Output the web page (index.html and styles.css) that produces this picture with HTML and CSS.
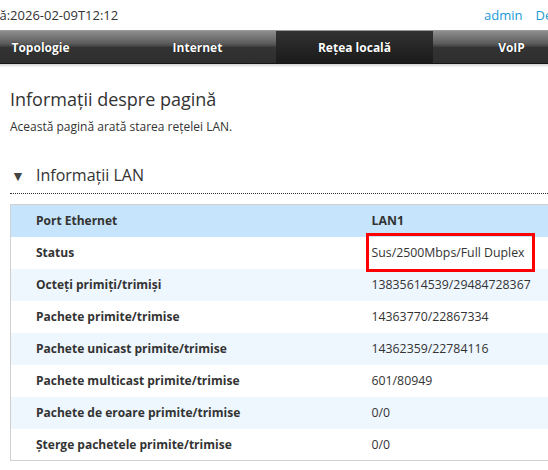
FILE: index.html
```html
<!DOCTYPE html>
<html lang="ro">

<head>
	<meta charset="UTF-8">
	<title>Rețea locală</title>
	<link rel="stylesheet" href="styles.css">
</head>

<body>
	<div class="page">
		<div class="topbar">
			<span class="clock">Ora curentă:2026-02-09T12:12</span>
			<span class="user">
				<a href="#">admin</a>
				<a href="#">Deconectare</a>
			</span>
		</div>
		<nav class="menu">
			<a href="#">Topologie</a>
			<a href="#">Internet</a>
			<a href="#" class="active">Rețea locală</a>
			<a href="#">VoIP</a>
			<a href="#">Administrare</a>
		</nav>
		<main class="content">
			<h1>Informații despre pagină</h1>
			<p class="desc">Această pagină arată starea rețelei LAN.</p>
			<h2 class="section"><span class="arrow">&#9660;</span>Informații LAN</h2>
			<table class="info">
				<thead>
					<tr>
						<th>Port Ethernet</th>
						<th>LAN1</th>
					</tr>
				</thead>
				<tbody>
					<tr>
						<td>Status</td>
						<td><span class="mark">Sus/2500Mbps/Full Duplex</span></td>
					</tr>
					<tr>
						<td>Octeți primiți/trimiși</td>
						<td>13835614539/29484728367</td>
					</tr>
					<tr>
						<td>Pachete primite/trimise</td>
						<td>14363770/22867334</td>
					</tr>
					<tr>
						<td>Pachete unicast primite/trimise</td>
						<td>14362359/22784116</td>
					</tr>
					<tr>
						<td>Pachete multicast primite/trimise</td>
						<td>601/80949</td>
					</tr>
					<tr>
						<td>Pachete de eroare primite/trimise</td>
						<td>0/0</td>
					</tr>
					<tr>
						<td>Șterge pachetele primite/trimise</td>
						<td>0/0</td>
					</tr>
				</tbody>
			</table>
		</main>
	</div>
</body>

</html>
```

FILE: styles.css
```css
* {
	padding: 0;
	margin: 0;
	box-sizing: border-box;
}

body {
	overflow: hidden;
	background-color: white;
	font-family: "Open Sans", "Noto Sans", sans-serif;
	color: #333;
}

/* the page is wider than the window and scrolled a little to the right */
.page {
	width: 820px;
	margin-left: -38px;
}

.topbar {
	height: 30px;
	display: grid;
	grid-template-columns: 522px auto;
	align-items: center;
	font-size: 13px;
}

.clock {
	margin-left: -28px;
	white-space: nowrap;
}

.user {
	display: flex;
	gap: 13px;
}

.user a {
	color: #1a9ad6;
	text-decoration: none;
}

.menu {
	display: grid;
	grid-template-columns: repeat(5, 157px);
	height: 34px;
	border-top: 1px solid #9a9a9a;
	border-bottom: 1px solid #161616;
	box-shadow: 0 2px 2px #d8d8d8;
	background: linear-gradient(#8e8e8e, #5a5a5a 40%, #3c3c3c 50%, #333 51%, #2e2e2e);
}

.menu a {
	display: flex;
	align-items: center;
	justify-content: center;
	color: white;
	font-size: 12px;
	font-weight: bold;
	text-decoration: none;
	text-shadow: 0 0 1px #000;
}

.menu a.active {
	background: linear-gradient(#333, #262626 50%, #1b1b1b);
}

.content {
	padding: 0 0 0 48px;
}

h1 {
	font-size: 18px;
	font-weight: normal;
	margin-top: 23px;
	line-height: 24px;
}

.desc {
	font-size: 12px;
	margin-top: 7px;
}

.section {
	font-size: 16px;
	font-weight: normal;
	margin-top: 29px;
	padding: 0 0 7px 1px;
	border-bottom: 1px dotted #333;
	display: flex;
	align-items: center;
}

.arrow {
	font-size: 14px;
	color: #444;
	width: 25px;
}

.info {
	margin-top: 10px;
	width: 100%;
	border-collapse: collapse;
	border: 1px solid #d0d0d0;
	border-right: none;
	font-size: 12.3px;
}

.info th,
.info td {
	height: 32px;
	padding: 0 0 0 25px;
	text-align: left;
	vertical-align: middle;
	white-space: nowrap;
}

.info th:first-child,
.info td:first-child {
	width: 336px;
	font-size: 12px;
	font-weight: bold;
}

.info th {
	background-color: #c6e4fb;
}

.info tbody tr:nth-child(even) {
	background-color: #eef6fe;
}

/* highlight box, allowed to spill past its row */
.mark {
	display: inline-block;
	margin: -8px 0 -8px -6px;
	padding: 8px 8px 8px 3px;
	border: 3px solid #f00;
}
```
